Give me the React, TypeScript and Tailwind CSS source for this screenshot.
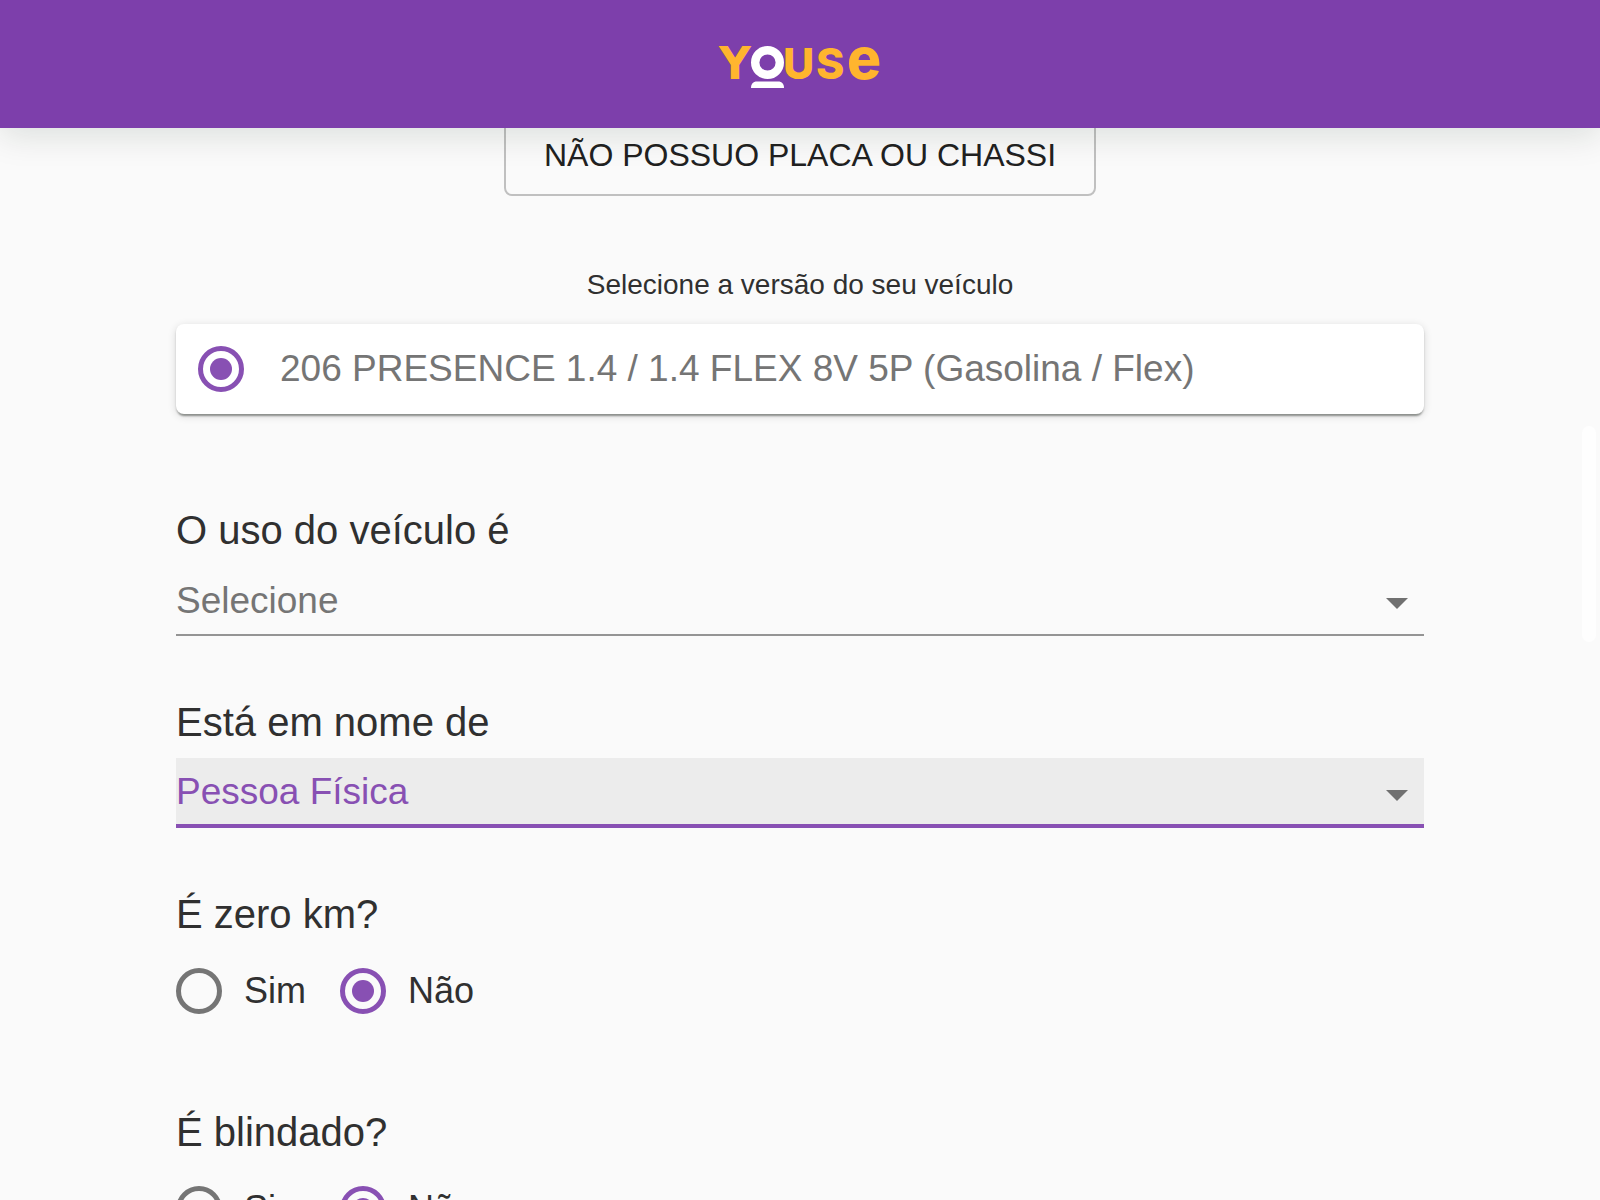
import { useState } from "react";

function YouseLogo() {
  return (
    <svg
      viewBox="0 -22 168 88"
      className="h-[88px] w-[168px]"
      role="img"
      aria-label="Youse"
      fontFamily="Inter, 'DejaVu Sans', sans-serif"
      fontWeight="800"
      fill="#ffb52e"
    >
      <text x="3" y="37" fontSize="44" fontFamily="'DejaVu Sans', sans-serif">Y</text>
      <text x="67" y="37" fontSize="43">U</text>
      <text x="100" y="37" fontSize="43">S</text>
      <text x="131" y="37" fontSize="57">e</text>
      <circle cx="51.500" cy="20.500" r="12.300" fill="none" stroke="#fff" strokeWidth="8.400" />
      <path d="M35 46C35 42 37 39.500 41 39.500H62C66 39.500 68 42 68 46Z" fill="#fff" />
    </svg>
  );
}

const radioClass =
  "grid size-[46px] shrink-0 appearance-none place-items-center rounded-full border-5 border-[#757575] outline-none before:size-[22px] before:rounded-full before:content-[''] checked:border-[#8850b3] checked:before:bg-[#8850b3]";

type SelectProps = {
  id: string;
  label: string;
  options: string[];
  active?: boolean;
};

function SelectField({ id, label, options, active = false }: SelectProps) {
  return (
    <div className="flex flex-col gap-3">
      <label htmlFor={id} className="text-[40px] leading-12">
        {label}
      </label>
      <div className="relative">
        <select
          id={id}
          className={
            active
              ? "block h-[70px] w-full appearance-none rounded-none border-b-4 border-[#8850b3] bg-[#ececec] pt-0.5 pr-16 text-[37px] text-[#8850b3] outline-none"
              : "block h-[70px] w-full appearance-none rounded-none border-b-2 border-[#949494] bg-transparent pt-0.5 pr-16 text-[37px] text-[#757575] outline-none"
          }
        >
          {options.map((option) => (
            <option key={option}>{option}</option>
          ))}
        </select>
        <svg
          viewBox="0 0 22 11"
          className="pointer-events-none absolute top-8 right-4 h-[11px] w-[22px] fill-[#707070]"
          aria-hidden="true"
        >
          <path d="M0 0H22L11 11Z" />
        </svg>
      </div>
    </div>
  );
}

function YesNoField({ name, label }: { name: string; label: string }) {
  const [value, setValue] = useState("Não");
  return (
    <fieldset>
      <legend className="text-[40px] leading-12">{label}</legend>
      <div className="mt-[30px] flex gap-[34px]">
        {["Sim", "Não"].map((option) => (
          <label key={option} className="flex items-center gap-[22px] text-[36px] leading-[46px]">
            <input
              type="radio"
              name={name}
              checked={value === option}
              onChange={() => setValue(option)}
              className={radioClass}
            />
            {option}
          </label>
        ))}
      </div>
    </fieldset>
  );
}

export default function App() {
  return (
    <div className="relative h-screen overflow-hidden bg-[#fafafa] font-['Liberation_Sans',Arial,sans-serif] text-[#303030]">
      <header className="relative z-10 flex h-32 items-center justify-center bg-[#7d3fab] shadow-[0_8px_32px_0_rgba(0,30,20,0.12)]">
        <YouseLogo />
      </header>

      <main className="-mt-4 flex flex-col px-44">
        <button
          type="button"
          className="h-[84px] self-center rounded-lg border-2 border-[#c0c0c0] px-[38px] pt-0.5 text-[32px] text-[#212121]"
        >
          NÃO POSSUO PLACA OU CHASSI
        </button>

        <h2 className="mt-[69px] text-center text-[28px] leading-10">Selecione a versão do seu veículo</h2>

        <label className="mt-[19px] flex h-[90px] items-center gap-9 rounded-lg bg-white px-[22px] text-[37px] text-[#757575] shadow-[0_4px_2px_-2px_rgba(0,10,5,0.25),0_2px_2px_0_rgba(0,10,5,0.18),0_2px_8px_0_rgba(0,10,5,0.14)]">
          <input type="radio" name="versao" defaultChecked className={radioClass} />
          206 PRESENCE 1.4 / 1.4 FLEX 8V 5P (Gasolina / Flex)
        </label>

        <form className="mt-[92px] flex flex-col">
          <div className="flex flex-col gap-[62px]">
            <SelectField id="uso" label="O uso do veículo é" options={["Selecione", "Particular", "Comercial"]} />
            <SelectField id="titular" label="Está em nome de" options={["Pessoa Física", "Pessoa Jurídica"]} active />
          </div>
          <div className="mt-[62px] flex flex-col gap-[94px]">
            <YesNoField name="zero-km" label="É zero km?" />
            <YesNoField name="blindado" label="É blindado?" />
          </div>
        </form>
      </main>

      <div className="absolute top-[426px] right-1 h-[216px] w-3.5 rounded-full bg-[#fefefe]" aria-hidden="true" />
    </div>
  );
}
